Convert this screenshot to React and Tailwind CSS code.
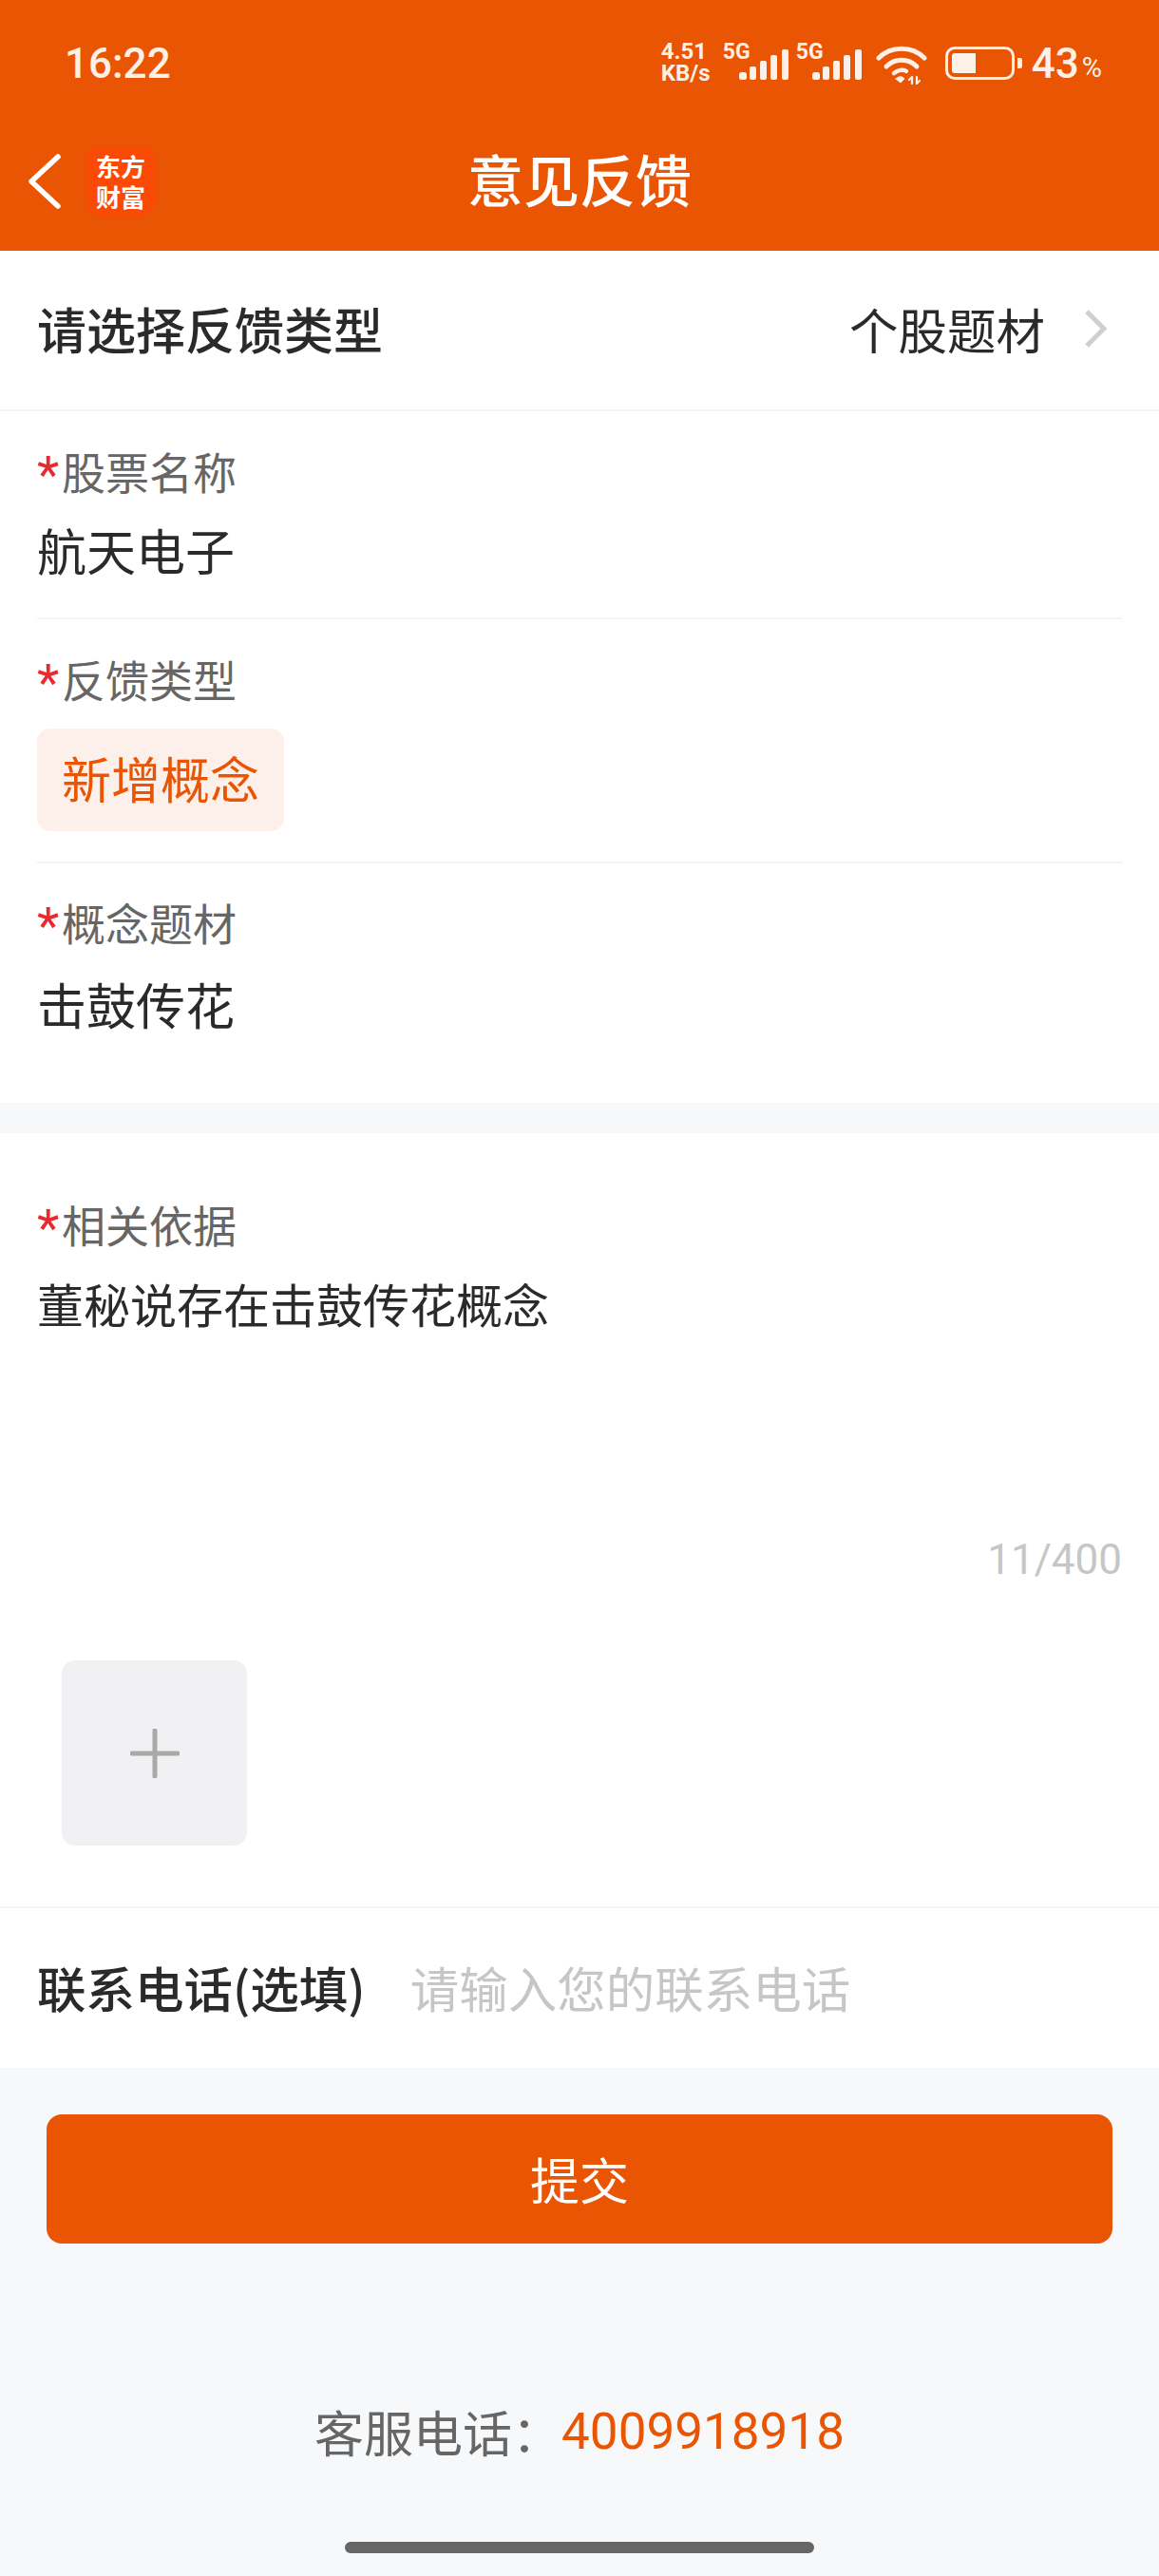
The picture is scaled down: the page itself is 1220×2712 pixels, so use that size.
import React from "react";

const cjk = { fontFamily: '"Noto Sans CJK SC", "Noto Sans", sans-serif' };
const latin = { fontFamily: 'Roboto, "Noto Sans", sans-serif' };

function Signal() {
  return (
    <svg width="52" height="32" viewBox="0 0 52 32" className="block">
      <rect x="0" y="24" width="8" height="8" rx="2.5" fill="#fdf0e6" />
      <rect x="11" y="18" width="7" height="14" rx="2" fill="#fdf0e6" />
      <rect x="22" y="12" width="7" height="20" rx="2" fill="#fdf0e6" />
      <rect x="33" y="6" width="7" height="26" rx="2" fill="#fdf0e6" />
      <rect x="45" y="0" width="7" height="32" rx="2" fill="#fdf0e6" />
    </svg>
  );
}

function Carrier({ className }) {
  return (
    <div className={"relative h-[38px] w-[69px] " + className}>
      <span className="absolute left-0 top-[-5px] text-[23px] font-bold leading-[24px] text-[#fdf0e6]">5G</span>
      <div className="absolute right-0 top-[4px]">
        <Signal />
      </div>
    </div>
  );
}

function StatusBar() {
  return (
    <div className="flex h-[92px] items-start justify-between pl-[68px] pr-[60px] pt-[42px] text-[#fdf0e6]" style={latin}>
      <span className="text-[44px] font-medium leading-[50px]">16:22</span>
      <div className="flex items-start">
        <div className="mr-[7px] mt-[1px] flex w-[58px] flex-col text-[24px] font-bold leading-[23px]">
          <span>4.51</span>
          <span>KB/s</span>
        </div>
        <Carrier className="mt-[6px]" />
        <Carrier className="ml-[8px] mt-[6px]" />
        <svg width="54" height="42" viewBox="0 0 54 42" className="ml-[15px] mt-[5px] block" fill="none" stroke="#fdf0e6" strokeLinecap="round">
          <path d="M3 14 C16 1 38 1 51 14" strokeWidth="5" />
          <path d="M11 23 C20 14 34 14 43 23" strokeWidth="5" />
          <path d="M19 30 C24 26 30 26 32 28" strokeWidth="4.5" />
          <path d="M21 36 L26 40 L30 36 C28 33 24 33 21 36Z" fill="#fdf0e6" strokeWidth="1" />
          <path d="M38 34 L38 41 M35 37 L38 34 M43 34 L43 41 M43 41 L46 38" strokeWidth="2.2" />
        </svg>
        <div className="ml-[19px] mt-[7px] flex items-center">
          <div className="h-[35px] w-[73px] rounded-[10px] border-[3px] border-[#fdf0e6] p-[4px]">
            <div className="h-full w-[25px] rounded-l-[3px] bg-[#fdf0e6]" />
          </div>
          <div className="ml-[3px] h-[11px] w-[5px] rounded-r-[2px] bg-[#fdf0e6]" />
        </div>
        <span className="ml-[10px] text-[44px] font-medium leading-[50px]">43</span>
        <span className="ml-[3px] mt-[13px] text-[29px] leading-[32px]">%</span>
      </div>
    </div>
  );
}

function NavBar() {
  return (
    <div className="relative flex h-[172px] items-center justify-center pt-[19px]">
      <div className="absolute left-[29px] top-[63px] flex items-center">
        <svg width="36" height="60" viewBox="0 0 36 60" fill="none" stroke="#fff" strokeWidth="5.5" strokeLinecap="round" strokeLinejoin="round" className="block">
          <path d="M32 4 L4 30 L32 56" />
        </svg>
        <div className="ml-[26px] flex h-[72px] w-[72px] flex-col items-center justify-center rounded-[14px] bg-[#fb4a05] text-[26px] font-bold leading-[32px] text-white">
          <span>东方</span>
          <span>财富</span>
        </div>
      </div>
      <span className="text-[59px] font-medium leading-[72px] text-white">意见反馈</span>
    </div>
  );
}

function Label({ children }) {
  return (
    <div className="flex h-[60px] items-center text-[46px] leading-[60px] text-[#666666]">
      <span className="w-[26px] pt-[10px] text-[54px] font-normal leading-[50px] text-[#e8292d]" style={latin}>*</span>
      <span>{children}</span>
    </div>
  );
}

export default function App() {
  return (
    <div className="flex min-h-[2712px] flex-col bg-[#f7f8fa] text-[#2a2a2a]" style={cjk}>
      <header className="h-[264px] bg-[#ea5504]">
        <StatusBar />
        <NavBar />
      </header>

      <section className="flex h-[169px] items-center justify-between border-b-2 border-[#f3f3f3] bg-white pb-[4px] pl-[39px] pr-[55px]">
        <span className="text-[52px] font-medium">请选择反馈类型</span>
        <div className="flex items-center">
          <span className="text-[51.5px]">个股题材</span>
          <svg width="24" height="40" viewBox="0 0 24 40" fill="none" stroke="#cfcfcf" strokeWidth="5" strokeLinejoin="miter" className="ml-[41px] block">
            <path d="M3 2 L21 20 L3 38" />
          </svg>
        </div>
      </section>

      <section className="bg-white px-[39px]">
        <div className="h-[219px] border-b-2 border-[#f3f3f3] pt-[32px]">
          <Label>股票名称</Label>
          <div className="mt-[18px] text-[52px] leading-[72px]">航天电子</div>
        </div>
        <div className="h-[257px] border-b-2 border-[#f3f3f3] pt-[32px]">
          <Label>反馈类型</Label>
          <div className="mt-[23px] flex h-[108px] w-[260px] items-center justify-center rounded-[14px] bg-[#fdf0ea] pb-[5px] text-[52px] text-[#ea5504]">
            新增概念
          </div>
        </div>
        <div className="h-[252px] pt-[31px]">
          <Label>概念题材</Label>
          <div className="mt-[21px] text-[52px] leading-[72px]">击鼓传花</div>
        </div>
      </section>

      <section className="mt-[32px] bg-white">
        <div className="px-[39px] pt-[65px]">
          <Label>相关依据</Label>
          <div className="mt-[18px] text-[49px] leading-[72px]">董秘说存在击鼓传花概念</div>
          <div className="mt-[204px] text-right text-[44px] font-normal leading-[60px] text-[#c6c6c6]" style={latin}>11/400</div>
        </div>
        <div className="ml-[65px] mt-[76px] flex h-[195px] w-[195px] items-center justify-center rounded-[14px] bg-[#f1f1f3]">
          <svg width="52" height="52" viewBox="0 0 52 52" stroke="#a9a9a9" strokeWidth="5" strokeLinecap="round" className="block">
            <path d="M26 2 V50 M2 26 H50" />
          </svg>
        </div>
        <div className="mt-[64px] flex h-[170px] items-center border-t-2 border-[#f3f3f3] px-[39px] pb-[3px]">
          <span className="text-[51.5px] font-medium">联系电话(选填)</span>
          <span className="ml-[47px] text-[51.5px] text-[#c6c6c6]">请输入您的联系电话</span>
        </div>
      </section>

      <div className="mx-[49px] mt-[49px] flex h-[136px] items-center justify-center rounded-[16px] bg-[#ea5504] text-[52px] text-white">
        提交
      </div>

      <div className="mt-[162px] flex h-[72px] items-center justify-center text-[52px] leading-[72px] text-[#666666]">
        <span>客服电话：</span>
        <span className="text-[53px] text-[#ea5504]" style={latin}>4009918918</span>
      </div>

      <div className="mx-auto mt-[80px] h-[12px] w-[494px] rounded-full bg-[#666666]" />
    </div>
  );
}
